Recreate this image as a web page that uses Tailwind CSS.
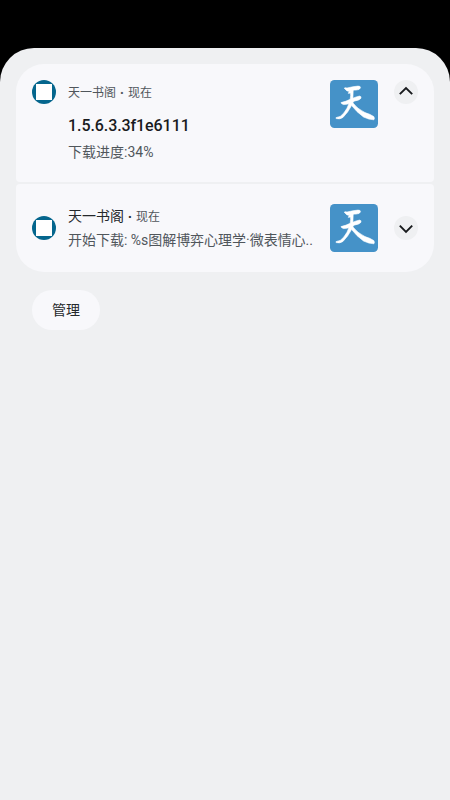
<!DOCTYPE html>
<html lang="zh-CN">
<head>
<meta charset="utf-8">
<title>通知</title>
<script src="https://cdn.jsdelivr.net/npm/@tailwindcss/browser@4"></script>
</head>
<body class="bg-black font-[Roboto,'Noto_Sans_CJK_SC',sans-serif]">
<svg class="hidden">
  <symbol id="logo" viewBox="0 0 48 48">
    <rect width="48" height="48" rx="4.5" fill="#4592c8"/>
    <g fill="#fff" stroke="#fff" stroke-width=".6" stroke-linejoin="round">
      <path d="M14.2 8.2Q14.8 7.2 17 8Q23 6.5 28 6.1Q30.8 6 30.5 7.8Q29.8 10 26 10.1Q21 9.8 18.5 11.3Q16.5 11.2 14.2 8.2Z"/>
      <path d="M19.8 10L23.2 10L22.9 18.2Q26 16.8 29.5 16.1Q31.6 16.3 31 18.2Q29.5 20.4 24.3 21.1L22.8 22.8Q27.5 29 35 32.6Q40 34 43.8 36.6Q45 38.4 43.9 39.8Q39 39.8 33.5 37Q26.5 32 21.6 25.5Q18 32.5 13 37.4Q9.5 39.6 6.2 38.6Q5.2 37.6 7 37.3Q10.5 37.2 13.8 33Q17.4 28.5 18.9 23.8Q16 24.6 13.3 24.5Q10.8 23.5 11 22.6Q15.5 21.7 20.2 19.3Q21 14.5 20.4 13L18.3 13.4Z"/>
    </g>
  </symbol>
</svg>
<main class="mt-12 h-[752px] rounded-t-[34px] bg-[#eff0f2] px-4 pt-4">
  <section class="flex h-[118px] items-start rounded-t-[28px] rounded-b-[4px] bg-[#f8f8fb] px-4 pt-4">
    <div class="flex size-6 shrink-0 items-center justify-center rounded-full bg-[#05668d]"><div class="size-4 bg-white"></div></div>
    <div class="ml-3 w-[262px] whitespace-nowrap">
      <div class="mt-1 flex h-[18px] text-[12px] leading-[18px] text-[#50565b]">天一书阁<span class="w-3 text-center font-black">·</span>现在</div>
      <div class="mt-[13px] h-[22px] text-[16px] leading-[22px] font-medium tracking-[-0.08px] text-[#191b1e]">1.5.6.3.3f1e6111</div>
      <div class="mt-[5px] h-5 text-[14px] leading-5 text-[#50565b]">下载进度:34%</div>
    </div>
    <svg class="size-12 shrink-0"><use href="#logo"/></svg>
    <div class="ml-4 flex size-6 shrink-0 items-center justify-center rounded-full bg-[#eff0f2]">
      <svg class="size-6" viewBox="0 0 24 24" fill="none" stroke="#17191c" stroke-width="1.9"><path d="M5.8 14.2L12 8L18.2 14.2"/></svg>
    </div>
  </section>
  <section class="mt-[1.5px] flex h-[88px] items-center rounded-t-[4px] rounded-b-[28px] bg-[#f8f8fb] px-4">
    <div class="flex size-6 shrink-0 items-center justify-center rounded-full bg-[#05668d]"><div class="size-4 bg-white"></div></div>
    <div class="ml-3 w-[262px] whitespace-nowrap">
      <div class="flex h-6 items-baseline text-[14px] leading-6 text-[#25282b]">天一书阁<span class="w-3 text-center text-[12px] font-black">·</span><span class="text-[12px] text-[#50565b]">现在</span></div>
      <div class="h-6 text-[14px] leading-6 tracking-[-0.02px] text-[#50565b]">开始下载: %s图解博弈心理学·微表情心..</div>
    </div>
    <svg class="size-12 shrink-0"><use href="#logo"/></svg>
    <div class="ml-4 flex size-6 shrink-0 items-center justify-center rounded-full bg-[#eff0f2]">
      <svg class="size-6" viewBox="0 0 24 24" fill="none" stroke="#17191c" stroke-width="1.9"><path d="M5.8 9.6L12 15.8L18.2 9.6"/></svg>
    </div>
  </section>
  <button class="mt-[18px] ml-4 flex h-10 w-[68px] items-center justify-center rounded-full bg-[#f8f8fb] pt-[2px] text-[14px] text-[#25282b]">管理</button>
</main>
</body>
</html>
